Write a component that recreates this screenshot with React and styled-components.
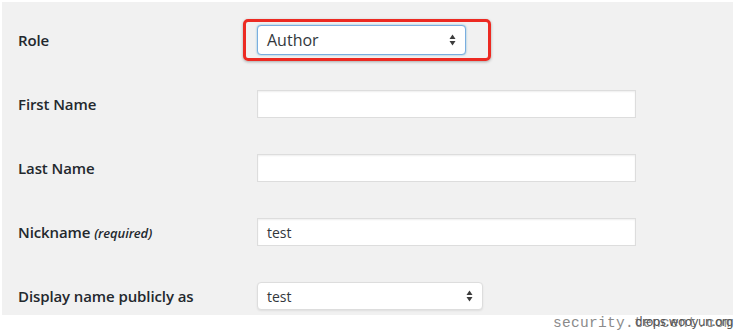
import styled, { createGlobalStyle } from "styled-components";

const Global = createGlobalStyle`
  html, body {
    margin: 0;
    background: #ffffff;
    font-family: "Open Sans", "Noto Sans", sans-serif;
  }
`

const Page = styled.div`
  position: relative;
  width: 736px;
  height: 333px;
  overflow: hidden;
  background: #ffffff;
`

const Panel = styled.div`
  margin: 2px 3px 0 2px;
  height: 313px;
  background: #f1f1f1;
  padding: 6px 0 0 16px;
  box-sizing: border-box;
`

const Row = styled.div`
  display: grid;
  grid-template-columns: 239px 1fr;
  align-items: center;
  height: 64px;
`

const Label = styled.div`
  font-size: 15px;
  font-weight: 600;
  color: #23282d;
  line-height: 20px;
  letter-spacing: -0.1px;
`

const Hint = styled.span`
  font-size: 13px;
  font-style: italic;
  font-weight: 600;
`

const Highlight = styled.div`
  display: inline-flex;
  justify-self: start;
  margin-left: -14px;
  padding: 3px 22px 3px 11px;
  border: 3px solid #ec2a22;
  border-radius: 5px;
  box-shadow: 0 1px 3px rgba(0, 0, 0, 0.3);
`

const SelectBox = styled.div`
  display: flex;
  align-items: center;
  justify-content: space-between;
  box-sizing: border-box;
  width: ${p => p.$w}px;
  height: ${p => p.$h}px;
  padding: 0 9px 0 9px;
  background: #fff;
  border: 1px solid ${p => (p.$focus ? "#7aaee0" : "#dddddd")};
  border-radius: 4px;
  box-shadow: ${p => (p.$focus ? "0 0 2px rgba(30,140,190,.6)" : "0 1px 2px rgba(0,0,0,.08)")};
  font-size: ${p => p.$fs}px;
  color: #32373c;
`

const TextInput = styled.div`
  box-sizing: border-box;
  width: 379px;
  height: 28px;
  padding: 0 9px;
  display: flex;
  align-items: center;
  background: #fff;
  border: 1px solid #dddddd;
  box-shadow: inset 0 1px 2px rgba(0, 0, 0, 0.07);
  font-size: 14px;
  color: #32373c;
`

const Mark = styled.div`
  position: absolute;
  right: 3px;
  bottom: 2px;
  font-family: "Liberation Mono", monospace;
  font-size: 14.5px;
  color: #8a8a8a;
  letter-spacing: 0.3px;
`

const MarkTop = styled.span`
  position: absolute;
  right: 0;
  top: 0;
  font-family: "DejaVu Sans", sans-serif;
  font-size: 12px;
  color: #555;
  letter-spacing: -0.6px;
`

const Arrows = () => (
  <svg width="7" height="12" viewBox="0 0 7 12">
    <path d="M3.5 0.5 L6.5 5 L0.5 5 Z" fill="#3c3c3c" />
    <path d="M0.5 7 L6.5 7 L3.5 11.5 Z" fill="#3c3c3c" />
  </svg>
)

function App() {
  return (
    <Page>
      <Global />
      <Panel>
        <Row>
          <Label>Role</Label>
          <Highlight>
            <SelectBox $w={209} $h={30} $fs={16} $focus>
              <span>Author</span>
              <Arrows />
            </SelectBox>
          </Highlight>
        </Row>
        <Row>
          <Label>First Name</Label>
          <TextInput />
        </Row>
        <Row>
          <Label>Last Name</Label>
          <TextInput />
        </Row>
        <Row>
          <Label>Nickname <Hint>(required)</Hint></Label>
          <TextInput>test</TextInput>
        </Row>
        <Row>
          <Label>Display name publicly as</Label>
          <SelectBox $w={226} $h={28} $fs={14}>
            <span>test</span>
            <Arrows />
          </SelectBox>
        </Row>
      </Panel>
      <Mark>
        security.tencent.com
        <MarkTop>drops.wooyun.org</MarkTop>
      </Mark>
    </Page>
  );
}

export default App;
